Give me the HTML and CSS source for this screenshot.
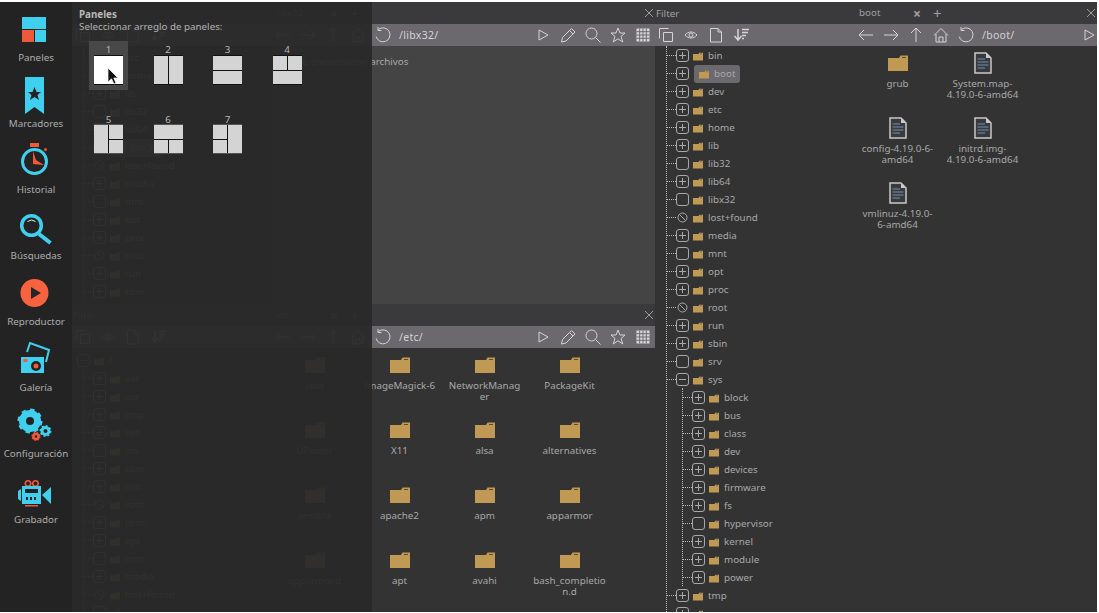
FILE: index.html
```html
<!DOCTYPE html>
<html>
    <head>
        <title>
            Archivos
        </title>
        <link rel="stylesheet" href="styles.css">
    </head>
    <body>
        <svg class="defs">
            <symbol id="folder" viewBox="0 0 20 16"><path d="M0 3H11L12.500 0.500H20V16H0Z" fill="#c09a55"/><path d="M14 2.500H18" stroke="#5c4a2a" stroke-width="1"/></symbol>
            <symbol id="doc" viewBox="0 0 18 22"><path d="M1 1H12L17 6V21H1Z" fill="#3a3a3c" stroke="#c9c9c9" stroke-width="1.500"/><path d="M12 1V6H17" fill="#c9c9c9"/><path d="M3.500 7H11M3.500 10H14.500M3.500 13H14.500M3.500 16H11" stroke="#6d8fb5" stroke-width="1.200"/></symbol>
            <symbol id="ban" viewBox="0 0 13 13"><circle cx="6.500" cy="6.500" r="4.500" fill="none" stroke="#a8a8a8"/><path d="M3.300 3.300L9.700 9.700" stroke="#a8a8a8"/></symbol>
            <symbol id="x" viewBox="0 0 10 10"><path d="M1 1L9 9M9 1L1 9" stroke="#9a9a9a" stroke-width="1" fill="none"/></symbol>
            <symbol id="back" viewBox="0 0 20 20"><path d="M3 10H17M3 10L8 5M3 10L8 15"/></symbol>
            <symbol id="forward" viewBox="0 0 20 20"><path d="M3 10H17M17 10L12 5M17 10L12 15"/></symbol>
            <symbol id="up" viewBox="0 0 20 20"><path d="M10 3V17M10 3L5 8M10 3L15 8"/></symbol>
            <symbol id="home" viewBox="0 0 20 20"><path d="M3 10.500L10 3.500L17 10.500M5 9V17H15V9M8 17V12H12V17"/></symbol>
            <symbol id="refresh" viewBox="0 0 20 20"><path d="M5.500 4.500A7 7 0 1 1 3.200 11.500M5 2V5.500H8.500"/></symbol>
            <symbol id="play" viewBox="0 0 20 20"><path d="M6 5L15 10L6 15Z"/></symbol>
            <symbol id="pencil" viewBox="0 0 20 20"><path d="M3.500 17L4.500 12.500L13.500 3.500L17 7L8 16ZM11.500 5.500L15 9"/></symbol>
            <symbol id="search" viewBox="0 0 20 20"><circle cx="8.500" cy="8.500" r="5.500"/><path d="M12.500 12.500L17.500 17.500"/></symbol>
            <symbol id="star" viewBox="0 0 20 20"><path d="M10 3L12 8H17L13 11.500L14.800 17L10 13.800L5.200 17L7 11.500L3 8H8Z"/></symbol>
            <symbol id="grid" viewBox="0 0 20 20"><rect x="3.500" y="3.500" width="13" height="13" fill="#d8d8d8" stroke="none"/><path d="M6.700 3.500V16.500M10 3.500V16.500M13.300 3.500V16.500M3.500 6.700H16.500M3.500 10H16.500M3.500 13.300H16.500" stroke="#6b686e"/></symbol>
            <symbol id="copy" viewBox="0 0 20 20"><path d="M3.500 13.500V3.500H12.500M7.500 7.500H16.500V16.500H7.500Z"/></symbol>
            <symbol id="eye" viewBox="0 0 20 20"><path d="M4 10C7.500 6 12.500 6 16 10C12.500 14 7.500 14 4 10Z"/><circle cx="10" cy="10" r="2"/></symbol>
            <symbol id="file" viewBox="0 0 20 20"><path d="M4.500 3.500H12L15.500 7V17H4.500ZM12 3.500V7H15.500"/></symbol>
            <symbol id="sort" viewBox="0 0 20 20"><path d="M7 4V15M3.500 11L7 15L10.500 11M11 4.500H18M11 7.500H17M11 10.500H15M11 13.500H13" stroke-width="1.500"/></symbol>
        </svg>

        <div class="app">
            <div class="sidebar">
                <div class="side-item">
                    <svg viewBox="0 0 72 44"><path d="M22 11H46V23H22Z" fill="#3fd0ef"/><path d="M22 24H34V36H22Z" fill="#f0583a"/><path d="M35 24H46V36H35Z" fill="#3fd0ef"/></svg>
                    <span>Paneles</span>
                </div>
                <div class="side-item">
                    <svg viewBox="0 0 72 44"><path d="M25 5H44V42L34.500 35L25 42Z" fill="#3fd0ef"/><path d="M34.500 15L36.500 20H41L37.500 23L39 28L34.500 25L30 28L31.500 23L28 20H32.500Z" fill="#222"/></svg>
                    <span>Marcadores</span>
                </div>
                <div class="side-item">
                    <svg viewBox="0 0 72 44"><path d="M30 5H39V9H30Z" fill="#f0583a"/><circle cx="34.500" cy="23.500" r="12" fill="none" stroke="#3fd0ef" stroke-width="3"/><circle cx="45.500" cy="11.500" r="1.500" fill="#f0583a"/><path d="M33 13L36 22L44 27L33 26Z" fill="#f0583a"/></svg>
                    <span>Historial</span>
                </div>
                <div class="side-item">
                    <svg viewBox="0 0 72 44"><circle cx="31.500" cy="21.500" r="9.800" fill="none" stroke="#3fd0ef" stroke-width="3.500"/><path d="M27.500 17.500Q31.500 14.500 35.500 17.500" fill="none" stroke="#d8f4fb" stroke-width="1"/><path d="M39 30L50.500 39" stroke="#3fd0ef" stroke-width="4"/></svg>
                    <span>Búsquedas</span>
                </div>
                <div class="side-item">
                    <svg viewBox="0 0 72 44"><circle cx="34.500" cy="23" r="14" fill="#f9623e"/><path d="M31 17L41 23L31 29Z" fill="#26262a"/></svg>
                    <span>Reproductor</span>
                </div>
                <div class="side-item">
                    <svg viewBox="0 0 72 44"><path d="M27 16L30 7L49 14L46 26" fill="none" stroke="#3fd0ef" stroke-width="2"/><path d="M21 21H44V37H21Z" fill="#3fd0ef"/><path d="M23.500 23H27.500V26H23.500Z" fill="#f0583a"/><circle cx="36" cy="30" r="5" fill="#222"/><circle cx="36" cy="30" r="2.500" fill="#f0583a"/></svg>
                    <span>Galería</span>
                </div>
                <div class="side-item">
                    <svg viewBox="0 0 72 44">
                        <circle cx="30" cy="19" r="7.500" fill="none" stroke="#3fd0ef" stroke-width="7"/>
                        <circle cx="30" cy="19" r="11" fill="none" stroke="#3fd0ef" stroke-width="3" stroke-dasharray="4.300 4.300"/>
                        <circle cx="45.500" cy="29" r="3.500" fill="none" stroke="#3fd0ef" stroke-width="3"/>
                        <circle cx="45.500" cy="29" r="5.200" fill="none" stroke="#3fd0ef" stroke-width="1.500" stroke-dasharray="2 2"/>
                        <circle cx="36" cy="34.500" r="2.500" fill="none" stroke="#f0583a" stroke-width="2.500"/>
                        <circle cx="36" cy="34.500" r="3.800" fill="none" stroke="#f0583a" stroke-width="1.500" stroke-dasharray="1.500 1.500"/>
                    </svg>
                    <span>Configuración</span>
                </div>
                <div class="side-item">
                    <svg viewBox="0 0 72 44">
                        <circle cx="28" cy="15.500" r="2.700" fill="none" stroke="#f0583a" stroke-width="1.600"/>
                        <circle cx="35.500" cy="15.500" r="2.700" fill="none" stroke="#f0583a" stroke-width="1.600"/>
                        <path d="M22 18H41V36H22Z" fill="#3fd0ef"/>
                        <path d="M25 21H38V25H25ZM26 29H28V32H26ZM30 29H32V32H30ZM34 29H36V32H34Z" fill="#222"/>
                        <path d="M18 23L21 21V33L18 31ZM42 27L51 19V36Z" fill="#3fd0ef"/>
                        <path d="M25 37H38V38.500H25Z" fill="#f0583a"/>
                    </svg>
                    <span>Grabador</span>
                </div>
            </div>

            <div class="left-col">
                <div class="pane pane-top">
                    <div class="head tree-head"></div>
                    <div class="head tabs">
                        <span class="tab-name">libx32</span>
                        <span class="tab-x">×</span>
                        <span class="tab-add">+</span>
                        <svg class="close"><use href="#x"/></svg>
                    </div>
                    <div class="tools">
                        <svg><use href="#copy"/></svg><svg><use href="#eye"/></svg><svg><use href="#file"/></svg><svg><use href="#sort"/></svg>
                    </div>
                    <div class="tools">
                        <svg><use href="#back"/></svg><svg><use href="#forward"/></svg><svg><use href="#up"/></svg><svg><use href="#home"/></svg><svg><use href="#refresh"/></svg>
                        <span class="path">/libx32/</span>
                        <span class="tools-end"><svg><use href="#play"/></svg><svg><use href="#pencil"/></svg><svg><use href="#search"/></svg><svg><use href="#star"/></svg><svg><use href="#grid"/></svg></span>
                    </div>
                    <div class="tree tree-a">
                        <div class="branch">
                            <div class="row"><i class="box plus"></i><span class="it"><svg><use href="#folder"/></svg>etc</span></div>
                            <div class="row"><i class="box plus"></i><span class="it"><svg><use href="#folder"/></svg>home</span></div>
                            <div class="row"><i class="box plus"></i><span class="it"><svg><use href="#folder"/></svg>lib</span></div>
                            <div class="row"><i class="box"></i><span class="it"><svg><use href="#folder"/></svg>lib32</span></div>
                            <div class="row"><i class="box plus"></i><span class="it"><svg><use href="#folder"/></svg>lib64</span></div>
                            <div class="row"><i class="box"></i><span class="it sel"><svg><use href="#folder"/></svg>libx32</span></div>
                            <div class="row"><svg class="ban"><use href="#ban"/></svg><span class="it"><svg><use href="#folder"/></svg>lost+found</span></div>
                            <div class="row"><i class="box plus"></i><span class="it"><svg><use href="#folder"/></svg>media</span></div>
                            <div class="row"><i class="box"></i><span class="it"><svg><use href="#folder"/></svg>mnt</span></div>
                            <div class="row"><i class="box plus"></i><span class="it"><svg><use href="#folder"/></svg>opt</span></div>
                            <div class="row"><i class="box plus"></i><span class="it"><svg><use href="#folder"/></svg>proc</span></div>
                            <div class="row"><svg class="ban"><use href="#ban"/></svg><span class="it"><svg><use href="#folder"/></svg>root</span></div>
                            <div class="row"><i class="box plus"></i><span class="it"><svg><use href="#folder"/></svg>run</span></div>
                            <div class="row"><i class="box plus"></i><span class="it"><svg><use href="#folder"/></svg>sbin</span></div>
                        </div>
                    </div>
                    <div class="files files-empty">No se encontraron archivos</div>
                </div>

                <div class="pane pane-bottom">
                    <div class="head tree-head">Filter</div>
                    <div class="head tabs">
                        <span class="tab-name">etc</span>
                        <span class="tab-x">×</span>
                        <span class="tab-add">+</span>
                        <svg class="close"><use href="#x"/></svg>
                    </div>
                    <div class="tools">
                        <svg><use href="#copy"/></svg><svg><use href="#eye"/></svg><svg><use href="#file"/></svg><svg><use href="#sort"/></svg>
                    </div>
                    <div class="tools">
                        <svg><use href="#back"/></svg><svg><use href="#forward"/></svg><svg><use href="#up"/></svg><svg><use href="#home"/></svg><svg><use href="#refresh"/></svg>
                        <span class="path">/etc/</span>
                        <span class="tools-end"><svg><use href="#play"/></svg><svg><use href="#pencil"/></svg><svg><use href="#search"/></svg><svg><use href="#star"/></svg><svg><use href="#grid"/></svg></span>
                    </div>
                    <div class="tree tree-b">
                        <div class="row root"><i class="box minus"></i><span class="it"><svg><use href="#folder"/></svg>/</span></div>
                        <div class="branch">
                            <div class="row"><i class="box plus"></i><span class="it"><svg><use href="#folder"/></svg>var</span></div>
                            <div class="row"><i class="box plus"></i><span class="it"><svg><use href="#folder"/></svg>usr</span></div>
                            <div class="row"><i class="box plus"></i><span class="it"><svg><use href="#folder"/></svg>tmp</span></div>
                            <div class="row"><i class="box plus"></i><span class="it"><svg><use href="#folder"/></svg>sys</span></div>
                            <div class="row"><i class="box"></i><span class="it"><svg><use href="#folder"/></svg>srv</span></div>
                            <div class="row"><i class="box plus"></i><span class="it"><svg><use href="#folder"/></svg>sbin</span></div>
                            <div class="row"><i class="box plus"></i><span class="it"><svg><use href="#folder"/></svg>run</span></div>
                            <div class="row"><svg class="ban"><use href="#ban"/></svg><span class="it"><svg><use href="#folder"/></svg>root</span></div>
                            <div class="row"><i class="box plus"></i><span class="it"><svg><use href="#folder"/></svg>proc</span></div>
                            <div class="row"><i class="box plus"></i><span class="it"><svg><use href="#folder"/></svg>opt</span></div>
                            <div class="row"><i class="box"></i><span class="it"><svg><use href="#folder"/></svg>mnt</span></div>
                            <div class="row"><i class="box plus"></i><span class="it"><svg><use href="#folder"/></svg>media</span></div>
                            <div class="row"><svg class="ban"><use href="#ban"/></svg><span class="it"><svg><use href="#folder"/></svg>lost+found</span></div>
                            <div class="row"><i class="box"></i><span class="it"><svg><use href="#folder"/></svg></span></div>
                        </div>
                    </div>
                    <div class="files">
                        <div class="cell"><svg class="big"><use href="#folder"/></svg><span>java</span></div>
                        <div class="cell"><svg class="big"><use href="#folder"/></svg><span>ImageMagick-6</span></div>
                        <div class="cell"><svg class="big"><use href="#folder"/></svg><span>NetworkManager</span></div>
                        <div class="cell"><svg class="big"><use href="#folder"/></svg><span>PackageKit</span></div>
                        <div class="cell"><svg class="big"><use href="#folder"/></svg><span>UPower</span></div>
                        <div class="cell"><svg class="big"><use href="#folder"/></svg><span>X11</span></div>
                        <div class="cell"><svg class="big"><use href="#folder"/></svg><span>alsa</span></div>
                        <div class="cell"><svg class="big"><use href="#folder"/></svg><span>alternatives</span></div>
                        <div class="cell"><svg class="big"><use href="#folder"/></svg><span>ansible</span></div>
                        <div class="cell"><svg class="big"><use href="#folder"/></svg><span>apache2</span></div>
                        <div class="cell"><svg class="big"><use href="#folder"/></svg><span>apm</span></div>
                        <div class="cell"><svg class="big"><use href="#folder"/></svg><span>apparmor</span></div>
                        <div class="cell"><svg class="big"><use href="#folder"/></svg><span>apparmor.d</span></div>
                        <div class="cell"><svg class="big"><use href="#folder"/></svg><span>apt</span></div>
                        <div class="cell"><svg class="big"><use href="#folder"/></svg><span>avahi</span></div>
                        <div class="cell"><svg class="big"><use href="#folder"/></svg><span>bash_completion.d</span></div>
                    </div>
                </div>
            </div>

            <div class="pane pane-right">
                <div class="head tree-head">Filter</div>
                <div class="head tabs">
                    <span class="tab-name">boot</span>
                    <span class="tab-x">×</span>
                    <span class="tab-add">+</span>
                    <svg class="close"><use href="#x"/></svg>
                </div>
                <div class="tools">
                    <svg><use href="#copy"/></svg><svg><use href="#eye"/></svg><svg><use href="#file"/></svg><svg><use href="#sort"/></svg>
                </div>
                <div class="tools">
                    <svg><use href="#back"/></svg><svg><use href="#forward"/></svg><svg><use href="#up"/></svg><svg><use href="#home"/></svg><svg><use href="#refresh"/></svg>
                    <span class="path">/boot/</span>
                    <span class="tools-end"><svg><use href="#play"/></svg></span>
                </div>
                <div class="tree">
                    <div class="branch">
                        <div class="row"><i class="box plus"></i><span class="it"><svg><use href="#folder"/></svg>bin</span></div>
                        <div class="row"><i class="box plus"></i><span class="it sel"><svg><use href="#folder"/></svg>boot</span></div>
                        <div class="row"><i class="box plus"></i><span class="it"><svg><use href="#folder"/></svg>dev</span></div>
                        <div class="row"><i class="box plus"></i><span class="it"><svg><use href="#folder"/></svg>etc</span></div>
                        <div class="row"><i class="box plus"></i><span class="it"><svg><use href="#folder"/></svg>home</span></div>
                        <div class="row"><i class="box plus"></i><span class="it"><svg><use href="#folder"/></svg>lib</span></div>
                        <div class="row"><i class="box"></i><span class="it"><svg><use href="#folder"/></svg>lib32</span></div>
                        <div class="row"><i class="box plus"></i><span class="it"><svg><use href="#folder"/></svg>lib64</span></div>
                        <div class="row"><i class="box"></i><span class="it"><svg><use href="#folder"/></svg>libx32</span></div>
                        <div class="row"><svg class="ban"><use href="#ban"/></svg><span class="it"><svg><use href="#folder"/></svg>lost+found</span></div>
                        <div class="row"><i class="box plus"></i><span class="it"><svg><use href="#folder"/></svg>media</span></div>
                        <div class="row"><i class="box"></i><span class="it"><svg><use href="#folder"/></svg>mnt</span></div>
                        <div class="row"><i class="box plus"></i><span class="it"><svg><use href="#folder"/></svg>opt</span></div>
                        <div class="row"><i class="box plus"></i><span class="it"><svg><use href="#folder"/></svg>proc</span></div>
                        <div class="row"><svg class="ban"><use href="#ban"/></svg><span class="it"><svg><use href="#folder"/></svg>root</span></div>
                        <div class="row"><i class="box plus"></i><span class="it"><svg><use href="#folder"/></svg>run</span></div>
                        <div class="row"><i class="box plus"></i><span class="it"><svg><use href="#folder"/></svg>sbin</span></div>
                        <div class="row"><i class="box"></i><span class="it"><svg><use href="#folder"/></svg>srv</span></div>
                        <div class="row"><i class="box minus"></i><span class="it"><svg><use href="#folder"/></svg>sys</span></div>
                        <div class="branch sub">
                            <div class="row"><i class="box plus"></i><span class="it"><svg><use href="#folder"/></svg>block</span></div>
                            <div class="row"><i class="box plus"></i><span class="it"><svg><use href="#folder"/></svg>bus</span></div>
                            <div class="row"><i class="box plus"></i><span class="it"><svg><use href="#folder"/></svg>class</span></div>
                            <div class="row"><i class="box plus"></i><span class="it"><svg><use href="#folder"/></svg>dev</span></div>
                            <div class="row"><i class="box plus"></i><span class="it"><svg><use href="#folder"/></svg>devices</span></div>
                            <div class="row"><i class="box plus"></i><span class="it"><svg><use href="#folder"/></svg>firmware</span></div>
                            <div class="row"><i class="box plus"></i><span class="it"><svg><use href="#folder"/></svg>fs</span></div>
                            <div class="row"><i class="box"></i><span class="it"><svg><use href="#folder"/></svg>hypervisor</span></div>
                            <div class="row"><i class="box plus"></i><span class="it"><svg><use href="#folder"/></svg>kernel</span></div>
                            <div class="row"><i class="box plus"></i><span class="it"><svg><use href="#folder"/></svg>module</span></div>
                            <div class="row"><i class="box plus"></i><span class="it"><svg><use href="#folder"/></svg>power</span></div>
                        </div>
                        <div class="row"><i class="box plus"></i><span class="it"><svg><use href="#folder"/></svg>tmp</span></div>
                        <div class="row"><i class="box plus"></i><span class="it"><svg><use href="#folder"/></svg></span></div>
                    </div>
                </div>
                <div class="files">
                    <div class="cell"><svg class="big"><use href="#folder"/></svg><span>grub</span></div>
                    <div class="cell"><svg class="big"><use href="#doc"/></svg><span>System.map-4.19.0-6-amd64</span></div>
                    <div class="cell"><svg class="big"><use href="#doc"/></svg><span>config-4.19.0-6-amd64</span></div>
                    <div class="cell"><svg class="big"><use href="#doc"/></svg><span>initrd.img-4.19.0-6-amd64</span></div>
                    <div class="cell"><svg class="big"><use href="#doc"/></svg><span>vmlinuz-4.19.0-6-amd64</span></div>
                </div>
            </div>

            <div class="popup">
                <div class="popup-title">Paneles</div>
                <div class="popup-sub">Seleccionar arreglo de paneles:</div>
                <div class="layouts">
                    <div class="layout hover"><span>1</span><div class="tile t1"><b></b></div></div>
                    <div class="layout"><span>2</span><div class="tile t2"><b></b><b></b></div></div>
                    <div class="layout"><span>3</span><div class="tile t3"><b></b><b></b></div></div>
                    <div class="layout"><span>4</span><div class="tile t4"><b></b><b></b><b></b></div></div>
                    <div class="layout"><span>5</span><div class="tile t5"><b></b><b></b><b></b></div></div>
                    <div class="layout"><span>6</span><div class="tile t6"><b></b><b></b><b></b></div></div>
                    <div class="layout"><span>7</span><div class="tile t7"><b></b><b></b><b></b></div></div>
                </div>
                <svg class="cursor" viewBox="0 0 12 18"><path d="M1 1V15L4.500 11.800L7 17L9 16L6.800 11H11Z" fill="#111" stroke="#eee" stroke-width="0.800"/></svg>
            </div>
        </div>
    </body>
</html>
```

FILE: styles.css
```css
html, body{
    margin: 0;
    height: 100%;
    background-color: white;
    overflow: hidden;
}
body{
    font-family: "Noto Sans", "Open Sans", sans-serif;
    font-size: 9.800px;
    color: #a8a8a8;
}
.defs{
    position: absolute;
    width: 0;
    height: 0;
}
.app{
    position: relative;
    display: flex;
    width: 1097px;
    height: 610px;
    margin-top: 2px;
    overflow: hidden;
}

/* sidebar */
.sidebar{
    flex: 0 0 72px;
    padding-top: 4px;
    background-color: #232323;
    box-sizing: border-box;
}
.side-item{
    display: flex;
    flex-direction: column;
    align-items: center;
    height: 66px;
}
.side-item svg{
    display: block;
    width: 72px;
    height: 44px;
}
.side-item span{
    padding-top: 1px;
    line-height: 14px;
    color: #adadad;
    white-space: nowrap;
}

/* panes */
.left-col{
    display: flex;
    flex-direction: column;
    flex: 0 0 583px;
}
.pane{
    display: grid;
    grid-template-columns: 200px minmax(0, 1fr);
    grid-template-rows: 22px 22px minmax(0, 1fr);
    overflow: hidden;
}
.pane-top{
    height: 302px;
}
.pane-bottom{
    height: 308px;
}
.pane-right{
    flex: 0 0 442px;
}
.head{
    display: flex;
    align-items: center;
    background-color: #3a393b;
    color: #a0a0a0;
}
.tree-head{
    padding-left: 1px;
}
.tabs{
    padding-left: 4px;
}
.tab-name{
    width: 54px;
    padding-bottom: 2px;
}
.tab-x{
    width: 20px;
    font-size: 14px;
    font-weight: bold;
}
.tab-add{
    font-size: 15px;
}
.close{
    width: 10px;
    height: 10px;
    margin-left: auto;
    margin-right: 1px;
}
.tools{
    display: flex;
    align-items: center;
    gap: 5px;
    padding-left: 1px;
    background-color: #6b686e;
    color: #d4d4d4;
}
.tools svg{
    flex: none;
    width: 20px;
    height: 20px;
    fill: none;
    stroke: currentColor;
    stroke-width: 1;
}
.path{
    margin-left: 1px;
    font-size: 10.500px;
    letter-spacing: 0.3px;
}
.tools-end{
    display: flex;
    gap: 5px;
    margin-left: auto;
    margin-right: 2px;
}
.pane-right .tools-end{
    margin-right: -2px;
}

/* tree */
.tree{
    overflow: hidden;
    background-color: #333;
}
.tree-a{
    padding-top: 2px;
}
.tree-b{
    padding-top: 3px;
}
.branch{
    margin-left: 11px;
    border-left: 1px dotted #bbb;
}
.branch.sub{
    margin-left: 15px;
    margin-bottom: 9px;
}
.branch.sub .row:last-child{
    margin-bottom: -9px;
}
.row{
    display: flex;
    align-items: center;
    height: 18px;
    white-space: nowrap;
}
.row:before{
    content: "";
    flex: none;
    width: 9px;
    border-top: 1px dotted #bbb;
}
.row.root{
    padding-left: 5px;
}
.row.root:before{
    display: none;
}
.box{
    position: relative;
    flex: none;
    box-sizing: border-box;
    width: 13px;
    height: 13px;
    border: 1px solid #a8a8a8;
    border-radius: 3px;
}
.plus:before, .minus:before, .plus:after{
    content: "";
    position: absolute;
    background-color: #a8a8a8;
}
.plus:before, .minus:before{
    left: 2px;
    right: 2px;
    top: 5px;
    height: 1px;
}
.plus:after{
    top: 2px;
    bottom: 2px;
    left: 5px;
    width: 1px;
}
.ban{
    flex: none;
    width: 13px;
    height: 13px;
}
.it{
    display: flex;
    align-items: center;
    gap: 5px;
    height: 18px;
    margin: 2px 0 0 4px;
    line-height: 18px;
}
.it svg{
    flex: none;
    width: 10px;
    height: 9px;
}
.sel{
    margin-left: 5px;
    padding: 0 5px;
    border-radius: 3px;
    background-color: #6b686e;
}

/* file grids */
.files{
    display: grid;
    grid-template-columns: repeat(auto-fill, 85px);
    grid-auto-rows: 65px;
    align-content: start;
    overflow: hidden;
    background-color: #333;
}
.pane-top .files{
    background-color: #444;
}
.files-empty{
    display: block;
    padding: 10px 0 0 10px;
    line-height: 12px;
}
.cell{
    display: flex;
    flex-direction: column;
    align-items: center;
    padding-top: 9px;
    text-align: center;
}
.cell span{
    width: 74px;
    margin-top: 7px;
    line-height: 11px;
    overflow-wrap: anywhere;
}
.big{
    flex: none;
    width: 20px;
    height: 16px;
}
.pane-right .cell{
    padding-top: 6px;
}
.pane-right .big{
    height: 22px;
}
.pane-right .cell span{
    margin-top: 4px;
}

/* layout popup */
.popup{
    position: absolute;
    top: 0;
    bottom: 0;
    left: 72px;
    width: 300px;
    box-sizing: border-box;
    padding: 7px 0 0 7px;
    background-color: rgba(41, 41, 41, 0.95);
}
.popup-title{
    line-height: 12px;
    font-weight: bold;
    color: #b8b8b8;
}
.popup-sub{
    line-height: 12px;
    color: #b0b0b0;
}
.layouts{
    display: grid;
    grid-template-columns: repeat(4, 39px);
    column-gap: 20.500px;
    row-gap: 21px;
    margin: 8px 0 0 10px;
}
.layout{
    display: flex;
    flex-direction: column;
    align-items: center;
    height: 49px;
    padding-top: 3px;
    box-sizing: border-box;
}
.layout span{
    padding-top: 1px;
    line-height: 10px;
    color: #b4b4b4;
}
.layout.hover{
    background-color: #484848;
}
.tile{
    display: grid;
    gap: 1px;
    flex: none;
    width: 29px;
    height: 30px;
    box-sizing: border-box;
    border-top: 1px solid #111;
    border-bottom: 1px solid #111;
    background-color: #111;
}
.tile b{
    background-color: #d4d4d4;
}
.t1 b{
    background-color: #fff;
}
.t2{
    grid-template-columns: 1fr 1fr;
}
.t3{
    grid-template-rows: 1fr 1fr;
}
.t4{
    grid-template-columns: 1fr 1fr;
    grid-template-rows: 1fr 1fr;
}
.t4 b:last-child{
    grid-column: span 2;
}
.t5, .t6, .t7{
    grid-template-columns: 1fr 1fr;
    grid-template-rows: 1fr 1fr;
    margin-top: -1px;
    border-color: #555;
}
.t5 b:first-child{
    grid-row: span 2;
}
.t6 b:first-child{
    grid-column: span 2;
}
.t7 b:nth-child(2){
    grid-row: span 2;
}
.cursor{
    position: absolute;
    left: 35px;
    top: 65px;
    width: 12px;
    height: 18px;
}
```
